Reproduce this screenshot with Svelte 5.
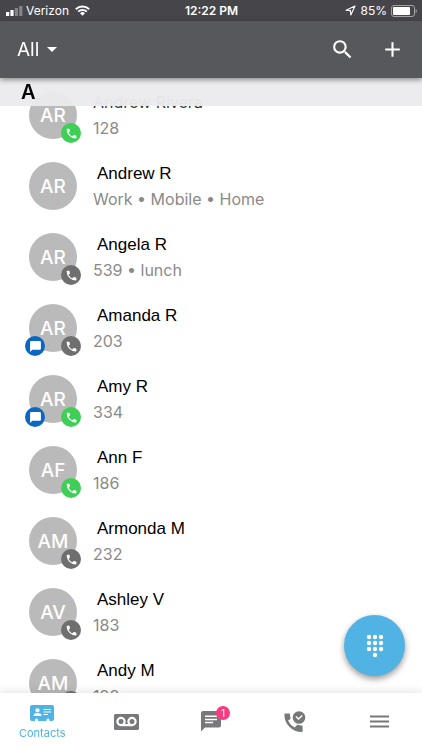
<script>
  const contacts = [
    { name: "Andrew Rivera", initials: "AR", detail: "128", phone: "online", native: true },
    { name: "Andrew R", initials: "AR", detail: "Work • Mobile • Home" },
    { name: "Angela R", initials: "AR", detail: "539 • lunch", phone: "offline" },
    { name: "Amanda R", initials: "AR", detail: "203", phone: "offline", chat: true },
    { name: "Amy R", initials: "AR", detail: "334", phone: "online", chat: true },
    { name: "Ann F", initials: "AF", detail: "186", phone: "online" },
    { name: "Armonda M", initials: "AM", detail: "232", phone: "offline" },
    { name: "Ashley V", initials: "AV", detail: "183", phone: "offline" },
    { name: "Andy M", initials: "AM", detail: "198", phone: "offline" },
  ];

  let activeTab = $state("contacts");
  const unread = 1;
</script>

<div class="app">
  <div class="status">
    <div class="carrier">
      <svg width="17" height="10" viewBox="0 0 17 10" fill="#fff">
        <rect x="0" y="6" width="3.2" height="4" rx="0.6" />
        <rect x="4.4" y="4" width="3.2" height="6" rx="0.6" />
        <rect x="8.8" y="2" width="3.2" height="8" rx="0.6" opacity="0.35" />
        <rect x="13.2" y="0" width="3.2" height="10" rx="0.6" opacity="0.35" />
      </svg>
      <span>Verizon</span>
      <svg class="wifi" width="15" height="11" viewBox="0 0 15 11" fill="none" stroke="#fff" stroke-width="1.9">
        <path d="M0.8 4.2A9.6 9.6 0 0 1 14.2 4.2" />
        <path d="M3.2 6.7A6.1 6.1 0 0 1 11.8 6.7" />
        <path d="M5 8.2A3.6 3.6 0 0 1 10 8.2L7.5 10.8Z" fill="#fff" stroke="none" />
      </svg>
    </div>
    <time>12:22 PM</time>
    <div class="power">
      <svg width="11" height="11" viewBox="0 0 11 11" fill="none" stroke="#fff" stroke-width="1.1" stroke-linejoin="round">
        <path d="M10 1L1 5.2L5.4 5.6L5.8 10Z" />
      </svg>
      <span>85%</span>
      <svg width="26" height="12" viewBox="0 0 26 12">
        <rect x="0.5" y="0.5" width="23" height="11" rx="2.5" fill="none" stroke="#a2a2a5" />
        <rect x="2" y="2" width="17" height="8" rx="1" fill="#fff" />
        <path d="M24.600 4C26.2 4.4 26.2 7.6 24.600 8Z" fill="#a2a2a5" />
      </svg>
    </div>
  </div>

  <header>
    <button class="filter">
      All
      <svg width="10" height="5" viewBox="0 0 10 5" fill="#fff"><path d="M0 0H10L5 5Z" /></svg>
    </button>
    <button aria-label="Search">
      <svg width="25" height="25" viewBox="0 0 24 24" fill="#fff">
        <path d="M15.5 14h-.79l-.28-.27A6.47 6.47 0 0 0 16 9.5 6.5 6.5 0 1 0 9.5 16c1.61 0 3.09-.59 4.23-1.57l.27.28v.79l5 4.99L20.49 19l-4.99-5zm-6 0a4.5 4.5 0 1 1 0-9 4.5 4.5 0 0 1 0 9z" />
      </svg>
    </button>
    <button aria-label="Add contact">
      <svg width="25" height="25" viewBox="0 0 24 24" fill="#fff">
        <path d="M19 13h-6v6h-2v-6H5v-2h6V5h2v6h6z" />
      </svg>
    </button>
  </header>

  <main>
    <div class="scroller">
      <h2>A</h2>
      <ul>
        {#each contacts as contact}
          <li>
            <div class="avatar">
              {contact.initials}
              {#if contact.chat}
                <span class="badge chat">
                  <svg width="13" height="13" viewBox="0 0 24 24" fill="#fff">
                    <path d="M20 2H4a2 2 0 0 0-2 2v18l4-4h14a2 2 0 0 0 2-2V4a2 2 0 0 0-2-2z" />
                  </svg>
                </span>
              {/if}
              {#if contact.phone}
                <span class="badge {contact.phone}">
                  <svg width="13" height="13" viewBox="0 0 24 24" fill="#fff">
                    <path d="M6.62 10.79a15.05 15.05 0 0 0 6.59 6.59l2.2-2.2a1 1 0 0 1 1.02-.24 11.4 11.4 0 0 0 3.57.57 1 1 0 0 1 1 1V20a1 1 0 0 1-1 1A17 17 0 0 1 3 4a1 1 0 0 1 1-1h3.5a1 1 0 0 1 1 1c0 1.25.2 2.45.57 3.57a1 1 0 0 1-.25 1.02z" />
                  </svg>
                </span>
              {/if}
            </div>
            <div class="info">
              <div class="name" class:native={contact.native}>{contact.name}</div>
              <div class="detail">{contact.detail}</div>
            </div>
          </li>
        {/each}
      </ul>
    </div>

    <button class="dialpad" aria-label="Open dialpad">
      <svg width="18" height="24" viewBox="0 0 18 24" fill="#fff">
        {#each [3, 9, 15] as y}
          {#each [3, 9, 15] as x}
            <circle cx={x} cy={y} r="2.2" />
          {/each}
        {/each}
        <circle cx="9" cy="21" r="2.2" />
      </svg>
    </button>
  </main>

  <nav>
    <button class:active={activeTab === "contacts"} onclick={() => (activeTab = "contacts")}>
      <svg width="24" height="16" viewBox="0 0 24 16">
        <path fill="currentColor" d="M2 0H22a2 2 0 0 1 2 2V14a2 2 0 0 1-2 2H19.500v-1a1.500 1.500 0 0 0-3 0v1H8v-1a1.500 1.500 0 0 0-3 0v1H2a2 2 0 0 1-2-2V2a2 2 0 0 1 2-2z" />
        <circle cx="7.500" cy="5.300" r="2.100" fill="#fff" />
        <path d="M3.600 11V10.200C3.600 8.800 5.600 8.100 7.500 8.100S11.400 8.800 11.400 10.200V11Z" fill="#fff" />
        <path d="M13.500 4.500H21M13.500 7H21M13.500 9.500H18" stroke="#fff" stroke-width="1.200" />
      </svg>
      <span>Contacts</span>
    </button>
    <button aria-label="Voicemail" onclick={() => (activeTab = "voicemail")}>
      <svg width="25" height="16" viewBox="0 0 25 16">
        <rect width="25" height="16" rx="1.500" fill="currentColor" />
        <g fill="none" stroke="#fff" stroke-width="2.200">
          <circle cx="7" cy="7.500" r="3.600" />
          <circle cx="18" cy="7.500" r="3.600" />
          <path d="M7 11.100H18" />
        </g>
      </svg>
    </button>
    <button aria-label="Messages" onclick={() => (activeTab = "messages")}>
      <span class="messages">
        <svg width="20" height="21" viewBox="0 0 20 21">
          <path fill="currentColor" d="M2 0H18a2 2 0 0 1 2 2V14.500a2 2 0 0 1-2 2H4L0 20.500V2a2 2 0 0 1 2-2z" />
          <path d="M4 5.200H16M4 8.400H16M4 11.600H12" stroke="#fff" stroke-width="1.500" />
        </svg>
        <span class="count">{unread}</span>
      </span>
    </button>
    <button aria-label="Call history" onclick={() => (activeTab = "history")}>
      <svg width="22" height="22" viewBox="0 0 22 22">
        <path
          fill="currentColor"
          d="M4 9.700a15.500 15.500 0 0 0 6.700 6.700l2.300-2.300a1 1 0 0 1 1-.25 12 12 0 0 0 3.500.6 1 1 0 0 1 1.100 1V20a1 1 0 0 1-1 1A17.300 17.300 0 0 1 .4 3.500a1 1 0 0 1 1-1H5a1 1 0 0 1 1 1c0 1.200.2 2.500.6 3.600a1 1 0 0 1-.3 1z"
        />
        <circle cx="15" cy="6.500" r="6.300" fill="currentColor" />
        <path d="M12 5.600L14.500 8L18.200 4.500" fill="none" stroke="#fff" stroke-width="1.400" />
      </svg>
    </button>
    <button aria-label="Menu" onclick={() => (activeTab = "menu")}>
      <svg width="19" height="13" viewBox="0 0 19 13" stroke="currentColor" stroke-width="2">
        <path d="M0 1.500H19M0 6.500H19M0 11.500H19" />
      </svg>
    </button>
  </nav>
</div>

<style>
  :global(body) {
    margin: 0;
  }
  .app {
    display: flex;
    flex-direction: column;
    height: 100vh;
    background: #fff;
    font-family: Inter, "Liberation Sans", sans-serif;
  }
  button {
    display: flex;
    align-items: center;
    justify-content: center;
    padding: 0;
    border: 0;
    background: none;
    color: inherit;
    font: inherit;
    cursor: pointer;
  }
  svg {
    display: block;
    flex: none;
  }

  .status {
    display: grid;
    grid-template-columns: 1fr auto 1fr;
    align-items: center;
    height: 21px;
    padding: 0 5px 0 6px;
    background: #46464a;
    color: #fff;
    font-size: 12px;
  }
  .carrier,
  .power {
    display: flex;
    align-items: center;
    gap: 4px;
  }
  .carrier {
    gap: 3px;
  }
  .wifi {
    margin-left: 3px;
  }
  .power {
    justify-content: flex-end;
  }
  time {
    font-weight: 600;
  }

  header {
    display: flex;
    align-items: center;
    gap: 25px;
    height: 57px;
    padding: 0 17px;
    background: #57585b;
    color: #fff;
    box-shadow: 0 2px 5px rgba(0, 0, 0, 0.4);
    z-index: 3;
  }
  .filter {
    gap: 8px;
    margin-right: auto;
    font-size: 19px;
  }

  main {
    position: relative;
    flex: 1;
    min-height: 0;
  }
  .scroller {
    height: 100%;
    overflow-y: auto;
    scrollbar-width: none;
  }
  h2 {
    position: sticky;
    top: 0;
    z-index: 2;
    margin: 0;
    padding-left: 21px;
    background: rgba(235, 235, 237, 0.96);
    color: #000;
    font-size: 20px;
    font-weight: 600;
    line-height: 28px;
  }
  ul {
    margin: -26px 0 0;
    padding: 0;
    list-style: none;
  }
  li {
    display: flex;
    gap: 16px;
    height: 60px;
    padding: 11px 16px 0 29px;
  }
  .avatar {
    position: relative;
    flex: none;
    width: 48px;
    height: 48px;
    border-radius: 50%;
    background: #bababa;
    color: #fff;
    font-size: 19px;
    font-weight: 500;
    line-height: 49px;
    text-align: center;
  }
  .badge {
    position: absolute;
    right: -4px;
    bottom: -4px;
    display: flex;
    align-items: center;
    justify-content: center;
    width: 20px;
    height: 20px;
    border-radius: 50%;
  }
  .chat {
    right: auto;
    left: -4px;
    background: #0b67c2;
  }
  .online {
    background: #3fcf57;
  }
  .offline {
    background: #6f6f6f;
  }
  .name {
    padding-left: 4px;
    color: #000;
    font-family: "Liberation Sans", Arial, sans-serif;
    font-size: 17px;
    line-height: 23px;
  }
  .native {
    padding-left: 0;
    color: #333;
    font-family: inherit;
    font-size: 16px;
  }
  .detail {
    padding-top: 3px;
    color: #8a8a8a;
    font-size: 16px;
    line-height: 23px;
  }

  .dialpad {
    position: absolute;
    right: 17px;
    bottom: 17px;
    width: 61px;
    height: 61px;
    border-radius: 50%;
    background: #50b3e3;
    box-shadow: 0 3px 6px rgba(0, 0, 0, 0.4);
  }

  nav {
    display: flex;
    height: 57px;
    background: #fff;
    color: #77787a;
    box-shadow: 0 -2px 8px rgba(0, 0, 0, 0.1);
    z-index: 2;
  }
  nav button {
    flex: 1;
    flex-direction: column;
    gap: 4px;
  }
  nav .active {
    padding-top: 3px;
    color: #50b3e3;
    font-size: 11px;
    line-height: 16px;
  }
  .messages {
    position: relative;
  }
  .count {
    position: absolute;
    top: -5px;
    right: -9px;
    width: 14px;
    border-radius: 50%;
    background: #fb3b7f;
    color: #fff;
    font-size: 10px;
    line-height: 14px;
    text-align: center;
  }
</style>
